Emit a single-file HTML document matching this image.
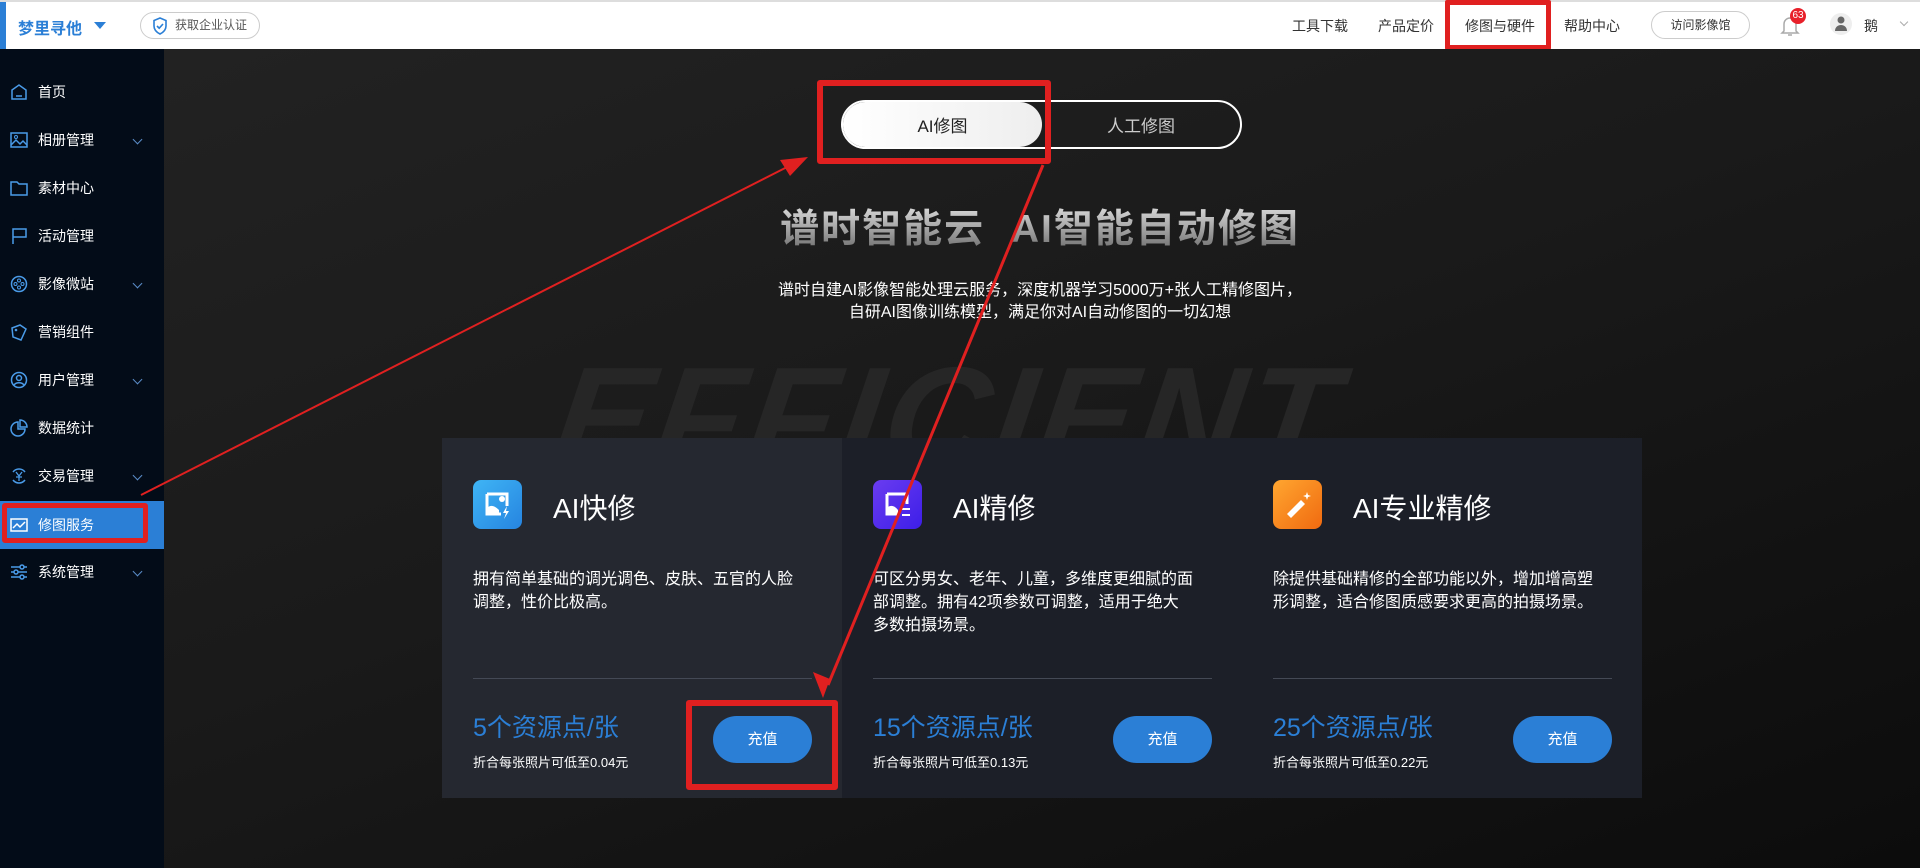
<!DOCTYPE html>
<html><head><meta charset="utf-8"><style>
*{margin:0;padding:0;box-sizing:border-box}
body{width:1920px;height:868px;overflow:hidden;position:relative;font-family:"Liberation Sans","Noto Sans CJK SC",sans-serif;background:#151515}
.hdr{position:absolute;left:0;top:0;width:1920px;height:49px;background:#fff;border-top:2px solid #ddd}
.abs{position:absolute;white-space:nowrap}
.side{position:absolute;left:0;top:49px;width:164px;height:819px;background:#030c18}
.item{position:absolute;left:0;width:164px;height:48px;color:#fff;font-size:14px;line-height:48px;padding-left:38px}
.item svg{position:absolute;left:10px;top:15px}
.chev{position:absolute;left:134px;top:20px;width:7px;height:7px;border-right:1px solid #5a8cc8;border-bottom:1px solid #5a8cc8;transform:rotate(45deg)}
.main{position:absolute;left:164px;top:49px;width:1756px;height:819px;background:linear-gradient(160deg,#222 0%,#1a1a1a 45%,#0c0c0c 100%)}
.card{position:absolute;top:438px;width:400px;height:360px;background:#1c1f28}
.card .ic{position:absolute;left:31px;top:42px;width:49px;height:49px;border-radius:8px}
.card .t{position:absolute;left:111px;top:49px;font-size:28px;color:#fff}
.card .d{position:absolute;left:31px;top:130px;width:328px;font-size:16px;line-height:23px;color:#fff}
.card .hr{position:absolute;left:31px;top:240px;width:339px;height:1px;background:#444955}
.card .p{position:absolute;left:31px;top:270px;font-size:25px;color:#2b7fd6}
.card .s{position:absolute;left:31px;top:314px;font-size:13px;color:#fff}
.card .b{position:absolute;left:271px;top:278px;width:99px;height:47px;border-radius:24px;background:#2b7fd6;color:#fff;font-size:15px;text-align:center;line-height:47px}
</style></head><body>
<div class="hdr">
 <div class="abs" style="left:0;top:0;width:6px;height:47px;background:#2b7fd6"></div>
 <div class="abs" style="left:18px;top:13px;font-size:16px;color:#2b7fd6;font-weight:bold">梦里寻他</div>
 <div class="abs" style="left:94px;top:20px;width:0;height:0;border-left:6px solid transparent;border-right:6px solid transparent;border-top:7px solid #2b7fd6"></div>
 <div class="abs" style="left:140px;top:10px;width:120px;height:27px;border:1px solid #ccc;border-radius:14px;font-size:12px;color:#555;line-height:25px;padding-left:34px">获取企业认证</div>
 <svg class="abs" style="left:152px;top:15px" width="16" height="18" viewBox="0 0 16 18"><path d="M8 1L2 3.5V9c0 4 3 6.5 6 8 3-1.5 6-4 6-8V3.5z" fill="none" stroke="#2b7fd6" stroke-width="1.6"/><path d="M5 9l2.2 2.2L11 7" fill="none" stroke="#2b7fd6" stroke-width="1.6"/></svg>
 <div class="abs" style="left:1292px;top:14px;font-size:14px;color:#333">工具下载</div>
 <div class="abs" style="left:1378px;top:14px;font-size:14px;color:#333">产品定价</div>
 <div class="abs" style="left:1445px;top:-2px;width:106px;height:50px;border:5px solid #e02020;border-radius:2px"></div>
 <div class="abs" style="left:1465px;top:14px;font-size:14px;color:#333">修图与硬件</div>
 <div class="abs" style="left:1564px;top:14px;font-size:14px;color:#333">帮助中心</div>
 <div class="abs" style="left:1651px;top:9px;width:99px;height:28px;border:1px solid #ccc;border-radius:14px;font-size:12px;color:#333;text-align:center;line-height:26px">访问影像馆</div>
 <svg class="abs" style="left:1780px;top:12px" width="20" height="24" viewBox="0 0 20 24"><path d="M4 17V10a6 6 0 0112 0v7l2 2H2z" fill="none" stroke="#aaa" stroke-width="1.5"/><path d="M8 21h4" stroke="#aaa" stroke-width="1.5"/></svg>
 <div class="abs" style="left:1790px;top:6px;width:16px;height:16px;border-radius:8px;background:#e8202a;color:#fff;font-size:10px;text-align:center;line-height:16px">63</div>
 <div class="abs" style="left:1830px;top:11px;width:22px;height:22px;border-radius:11px;background:#eee"></div>
 <svg class="abs" style="left:1834px;top:13px" width="14" height="18" viewBox="0 0 14 18"><circle cx="7" cy="5" r="3.5" fill="#666"/><path d="M1 16c0-4 3-6 6-6s6 2 6 6z" fill="#666"/></svg>
 <div class="abs" style="left:1864px;top:14px;font-size:14px;color:#333">鹅</div>
 <div class="abs" style="left:1901px;top:17px;width:6px;height:6px;border-right:1px solid #aaa;border-bottom:1px solid #aaa;transform:rotate(45deg)"></div>
</div>
<div class="side">
 <div class="item" style="top:19px"><svg width="18" height="18" viewBox="0 0 18 18"><path d="M2 7l7-5 7 5v9H2z M6 13h6" fill="none" stroke="#4a9be8" stroke-width="1.5"/></svg>首页</div>
 <div class="item" style="top:67px"><svg width="18" height="18" viewBox="0 0 18 18"><rect x="1" y="2" width="16" height="14" fill="none" stroke="#4a9be8" stroke-width="1.5"/><circle cx="6" cy="6" r="1.5" fill="none" stroke="#4a9be8"/><path d="M1 14l5-5 4 4 3-3 4 4" fill="none" stroke="#4a9be8" stroke-width="1.5"/></svg>相册管理<span class="chev"></span></div>
 <div class="item" style="top:115px"><svg width="18" height="18" viewBox="0 0 18 18"><path d="M1 3h6l2 2h8v11H1z" fill="none" stroke="#4a9be8" stroke-width="1.5"/></svg>素材中心</div>
 <div class="item" style="top:163px"><svg width="18" height="18" viewBox="0 0 18 18"><path d="M3 17V2h13v8H3" fill="none" stroke="#4a9be8" stroke-width="1.5"/></svg>活动管理</div>
 <div class="item" style="top:211px"><svg width="18" height="18" viewBox="0 0 18 18"><circle cx="9" cy="9" r="7.5" fill="none" stroke="#4a9be8" stroke-width="1.5"/><circle cx="9" cy="5.5" r="1.5" fill="none" stroke="#4a9be8"/><circle cx="5.5" cy="9" r="1.5" fill="none" stroke="#4a9be8"/><circle cx="12.5" cy="9" r="1.5" fill="none" stroke="#4a9be8"/><circle cx="9" cy="12.5" r="1.5" fill="none" stroke="#4a9be8"/></svg>影像微站<span class="chev"></span></div>
 <div class="item" style="top:259px"><svg width="18" height="18" viewBox="0 0 18 18"><path d="M2 5l8-3 6 4-5 11-8-3z" fill="none" stroke="#4a9be8" stroke-width="1.5"/><circle cx="6" cy="7" r="1.3" fill="#4a9be8"/></svg>营销组件</div>
 <div class="item" style="top:307px"><svg width="18" height="18" viewBox="0 0 18 18"><circle cx="9" cy="9" r="7.5" fill="none" stroke="#4a9be8" stroke-width="1.5"/><circle cx="9" cy="7" r="2.5" fill="none" stroke="#4a9be8" stroke-width="1.5"/><path d="M4 14c2-3 8-3 10 0" fill="none" stroke="#4a9be8" stroke-width="1.5"/></svg>用户管理<span class="chev"></span></div>
 <div class="item" style="top:355px"><svg width="18" height="18" viewBox="0 0 18 18"><path d="M8 3a7 7 0 107 7H8z" fill="none" stroke="#4a9be8" stroke-width="1.5"/><path d="M10 1v7h7a7 7 0 00-7-7z" fill="none" stroke="#4a9be8" stroke-width="1.5"/></svg>数据统计</div>
 <div class="item" style="top:403px"><svg width="18" height="18" viewBox="0 0 18 18"><path d="M3 5a7.5 7.5 0 0112 0M15 13a7.5 7.5 0 01-12 0" fill="none" stroke="#4a9be8" stroke-width="1.5"/><path d="M6 5l3 4 3-4M9 9v5M6 10h6" fill="none" stroke="#4a9be8" stroke-width="1.3"/></svg>交易管理<span class="chev"></span></div>
 <div class="item" style="top:452px;background:#2b7fd6"><svg width="18" height="18" viewBox="0 0 18 18"><rect x="1" y="3" width="16" height="12" fill="none" stroke="#fff" stroke-width="1.5"/><path d="M3 12l4-4 3 3 5-5" fill="none" stroke="#fff" stroke-width="1.5"/></svg>修图服务</div>
 <div class="abs" style="left:2px;top:454px;width:146px;height:40px;border:5px solid #e02020;border-radius:3px"></div>
 <div class="item" style="top:499px"><svg width="18" height="18" viewBox="0 0 18 18"><path d="M1 4h16M1 9h16M1 14h16" stroke="#4a9be8" stroke-width="1.5"/><circle cx="12" cy="4" r="2" fill="#030c18" stroke="#4a9be8" stroke-width="1.5"/><circle cx="6" cy="9" r="2" fill="#030c18" stroke="#4a9be8" stroke-width="1.5"/><circle cx="12" cy="14" r="2" fill="#030c18" stroke="#4a9be8" stroke-width="1.5"/></svg>系统管理<span class="chev"></span></div>
</div>
<div class="main"></div>
<div class="abs" style="left:555px;top:335px;font-size:145px;font-weight:bold;font-style:italic;color:#262626;letter-spacing:4px;transform:skewX(-8deg)">EFFICIENT</div>
<div class="abs" style="left:841px;top:100px;width:401px;height:49px;border:2px solid #fff;border-radius:25px"></div>
<div class="abs" style="left:843px;top:102px;width:199px;height:45px;border-radius:23px;background:linear-gradient(90deg,#fff,#eee)"></div>
<div class="abs" style="left:843px;top:112px;width:199px;text-align:center;font-size:17px;color:#222">AI修图</div>
<div class="abs" style="left:1042px;top:112px;width:198px;text-align:center;font-size:17px;color:#ccc">人工修图</div>
<div class="abs" style="left:817px;top:80px;width:234px;height:84px;border:6px solid #e02020;border-radius:3px"></div>
<div class="abs" style="left:740px;top:198px;width:600px;text-align:center;font-size:39px;font-weight:bold;letter-spacing:2px;background:linear-gradient(#eee,#666);-webkit-background-clip:text;color:transparent">谱时智能云&nbsp;&nbsp;AI智能自动修图</div>
<div class="abs" style="left:680px;top:280px;width:720px;text-align:center;font-size:16px;line-height:22px;color:#fff">谱时自建AI影像智能处理云服务，深度机器学习5000万+张人工精修图片，<br>自研AI图像训练模型，满足你对AI自动修图的一切幻想</div>
<div class="card" style="left:442px;background:#252830">
 <div class="ic" style="background:linear-gradient(135deg,#3fb5f5,#2684e0)"><svg width="49" height="49" viewBox="0 0 49 49"><path d="M14 14h20v12M14 14v20h14" fill="none" stroke="#fff" stroke-width="3"/><path d="M14 28c4-4 8-2 12 2v4H14z" fill="#fff"/><circle cx="29" cy="19" r="3" fill="#fff"/><path d="M34 26l-4 7h3l-2 6 5-8h-3z" fill="#fff"/></svg></div>
 <div class="t">AI快修</div>
 <div class="d">拥有简单基础的调光调色、皮肤、五官的人脸调整，性价比极高。</div>
 <div class="hr"></div><div class="p">5个资源点/张</div><div class="s">折合每张照片可低至0.04元</div><div class="b">充值</div>
</div>
<div class="card" style="left:842px">
 <div class="ic" style="background:linear-gradient(135deg,#6a3cf0,#3d1ee8)"><svg width="49" height="49" viewBox="0 0 49 49"><path d="M14 14h20v10M14 14v20h12" fill="none" stroke="#fff" stroke-width="3"/><path d="M14 28c4-4 8-2 11 2v4H14z" fill="#fff"/><path d="M29 29h8M29 35h8" stroke="#fff" stroke-width="2"/></svg></div>
 <div class="t">AI精修</div>
 <div class="d">可区分男女、老年、儿童，多维度更细腻的面部调整。拥有42项参数可调整，适用于绝大<br>多数拍摄场景。</div>
 <div class="hr"></div><div class="p">15个资源点/张</div><div class="s">折合每张照片可低至0.13元</div><div class="b">充值</div>
</div>
<div class="card" style="left:1242px">
 <div class="ic" style="background:linear-gradient(135deg,#ffa630,#f06a10)"><svg width="49" height="49" viewBox="0 0 49 49"><path d="M14 34l14-14 4 4-14 14z" fill="#fff"/><path d="M34 12l1 3 3 1-3 1-1 3-1-3-3-1 3-1z" fill="#fff"/></svg></div>
 <div class="t">AI专业精修</div>
 <div class="d">除提供基础精修的全部功能以外，增加增高塑形调整，适合修图质感要求更高的拍摄场景。</div>
 <div class="hr"></div><div class="p">25个资源点/张</div><div class="s">折合每张照片可低至0.22元</div><div class="b">充值</div>
</div>
<div class="abs" style="left:686px;top:700px;width:152px;height:90px;border:6px solid #e02020;border-radius:3px"></div>
<svg class="abs" style="left:0;top:0" width="1920" height="868">
 <line x1="141" y1="495" x2="795" y2="163" stroke="#e02020" stroke-width="2"/>
 <path d="M808 157l-28 3 10 16z" fill="#e02020"/>
 <line x1="1043" y1="165" x2="828" y2="685" stroke="#e02020" stroke-width="3"/>
 <path d="M823 698l-10-26 17 7z" fill="#e02020"/>
</svg>
</body></html>
